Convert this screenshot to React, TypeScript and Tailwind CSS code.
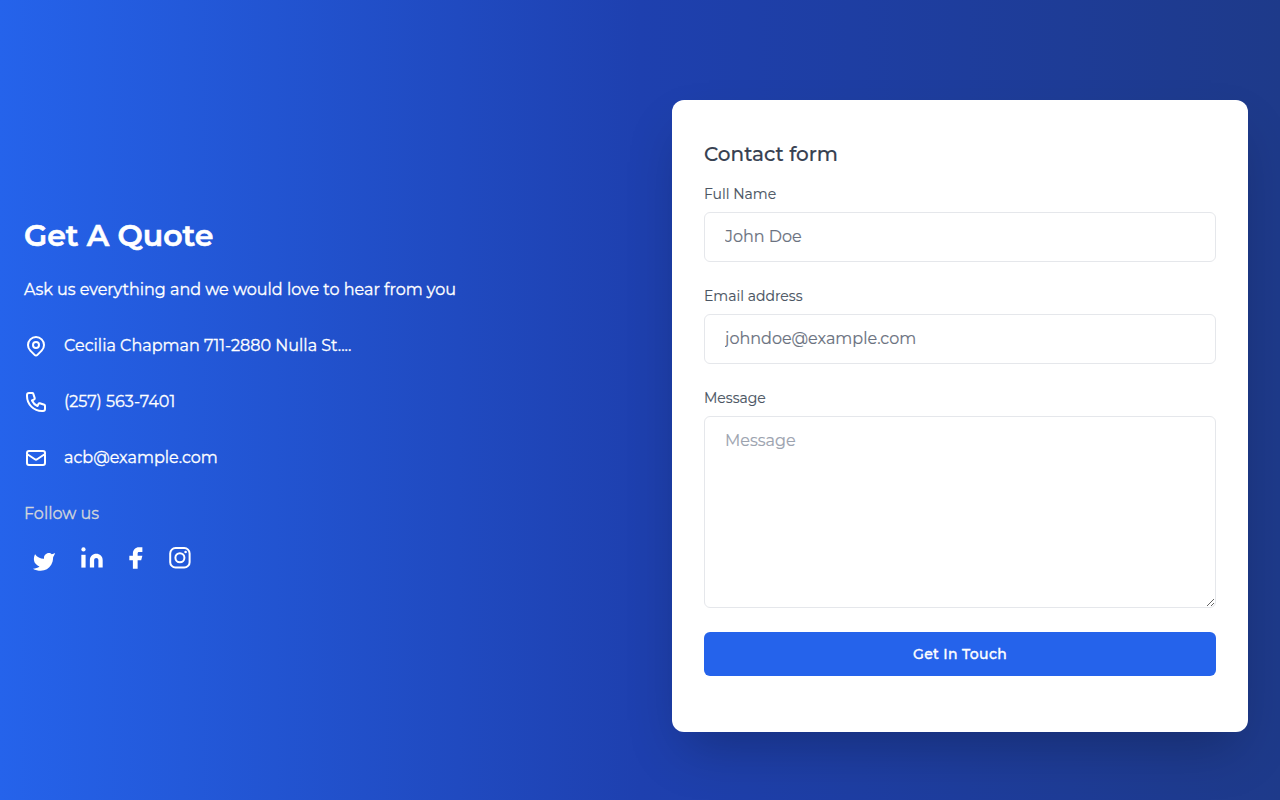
import type { ReactNode } from "react";

function OutlineIcon({ children }: { children: ReactNode }) {
  return (
    <svg className="size-6 shrink-0" viewBox="0 0 24 24" fill="none" stroke="currentColor" strokeWidth={2} strokeLinecap="round" strokeLinejoin="round">
      {children}
    </svg>
  );
}

function ContactInfo() {
  return (
    <section className="w-1/2 px-6 pb-[33px] text-white [-webkit-text-stroke:0.3px]">
      <h1 className="h-9 whitespace-nowrap text-[30px] leading-9 font-semibold [-webkit-text-stroke:0.6px]">Get A Quote</h1>
      <p className="mt-6 h-6 whitespace-nowrap text-base leading-6">
        Ask us everything and we would love to hear from you
      </p>
      <div className="mt-8 flex flex-col gap-8 text-base leading-6">
        <p className="flex h-6 items-start gap-4">
          <OutlineIcon>
            <path d="M17.657 16.657L13.414 20.9a1.998 1.998 0 01-2.827 0l-4.244-4.243a8 8 0 1111.314 0z" />
            <path d="M15 11a3 3 0 11-6 0 3 3 0 016 0z" />
          </OutlineIcon>
          <span className="whitespace-nowrap">Cecilia Chapman 711-2880 Nulla St....</span>
        </p>
        <p className="flex h-6 items-start gap-4">
          <OutlineIcon>
            <path d="M3 5a2 2 0 012-2h3.28a1 1 0 01.948.684l1.498 4.493a1 1 0 01-.502 1.21l-2.257 1.13a11.042 11.042 0 005.516 5.516l1.13-2.257a1 1 0 011.21-.502l4.493 1.498a1 1 0 01.684.949V19a2 2 0 01-2 2h-1C9.716 21 3 14.284 3 6V5z" />
          </OutlineIcon>
          <span className="whitespace-nowrap">(257) 563-7401</span>
        </p>
        <p className="flex h-6 items-start gap-4">
          <OutlineIcon>
            <path d="M3 8l7.89 5.26a2 2 0 002.22 0L21 8M5 19h14a2 2 0 002-2V7a2 2 0 00-2-2H5a2 2 0 00-2 2v10a2 2 0 002 2z" />
          </OutlineIcon>
          <span className="whitespace-nowrap">acb@example.com</span>
        </p>
      </div>
      <h3 className="mt-8 h-6 text-base leading-6 text-[#d1d5db]">Follow us</h3>
      <div className="mt-4 flex gap-3">
        <a href="#" aria-label="Twitter">
          <svg className="size-10" viewBox="0 0 24 24" fill="currentColor">
            <path d="M18.6668 6.67334C18.0002 7.00001 17.3468 7.13268 16.6668 7.33334C15.9195 6.49001 14.8115 6.44334 13.7468 6.84201C12.6822 7.24068 11.9848 8.21534 12.0002 9.33334V10C9.83683 10.0553 7.91016 9.07001 6.66683 7.33334C6.66683 7.33334 3.87883 12.2887 9.3335 14.6667C8.0855 15.498 6.84083 16.0587 5.3335 16C7.53883 17.202 9.94216 17.6153 12.0228 17.0113C14.4095 16.318 16.3708 14.5293 17.1235 11.85C17.348 11.0351 17.4595 10.1932 17.4548 9.34801C17.4535 9.18201 18.4615 7.50001 18.6668 6.67268V6.67334Z" />
          </svg>
        </a>
        <a href="#" aria-label="LinkedIn">
          <svg className="size-8" viewBox="0 0 24 24" fill="currentColor">
            <path d="M15.2 8.8C16.4731 8.8 17.694 9.30576 18.5941 10.2059C19.4943 11.1061 20 12.327 20 13.6V19.2H16.8V13.6C16.8 13.1757 16.6315 12.7687 16.3314 12.4687C16.0313 12.1686 15.6244 12 15.2 12C14.7757 12 14.3687 12.1686 14.0687 12.4687C13.7686 12.7687 13.6 13.1757 13.6 13.6V19.2H10.4V13.6C10.4 12.327 10.9057 11.1061 11.8059 10.2059C12.7061 9.30576 13.927 8.8 15.2 8.8Z" />
            <path d="M7.2 9.6H4V19.2H7.2V9.6Z" />
            <circle cx="5.6" cy="5.6" r="1.6" />
          </svg>
        </a>
        <a href="#" aria-label="Facebook">
          <svg className="size-8" viewBox="0 0 24 24" fill="currentColor">
            <path d="M7 10.2222V13.7778H9.66667V20H13.2222V13.7778H15.8889L16.7778 10.2222H13.2222V8.44444C13.2222 8.2087 13.3159 7.9826 13.4826 7.81591C13.6493 7.64921 13.8754 7.55556 14.1111 7.55556H16.7778V4H14.1111C12.9324 4 11.8019 4.46825 10.9684 5.30175C10.1349 6.13524 9.66667 7.2657 9.66667 8.44444V10.2222H7Z" />
          </svg>
        </a>
        <a href="#" aria-label="Instagram">
          <svg className="size-8" viewBox="0 0 24 24" fill="none" stroke="currentColor" strokeWidth={1.5}>
            <rect x="4.65" y="4.55" width="14.55" height="14.55" rx="4" />
            <circle cx="11.93" cy="11.825" r="3.38" />
            <circle cx="16.2" cy="7.555" r="0.957" fill="currentColor" stroke="none" />
          </svg>
        </a>
      </div>
    </section>
  );
}

function ContactForm() {
  return (
    <section className="w-1/2 px-8">
      <div className="h-[632px] rounded-xl bg-white px-8 pt-10 shadow-2xl [-webkit-text-stroke:0.15px]">
        <h2 className="h-7 text-xl leading-7 font-medium text-[#374151]">Contact form</h2>
        <form className="mt-4">
          <label className="block">
            <span className="block h-5 text-sm leading-5 text-[#4b5563]">Full Name</span>
            <input type="text" placeholder="John Doe" className="mt-2 block h-[50px] w-full rounded-md border border-[#e5e7eb] bg-white px-5 pb-0.5 text-base text-[#374151] placeholder:text-[#6b7280]" />
          </label>
          <label className="mt-6 block">
            <span className="block h-5 text-sm leading-5 text-[#4b5563]">Email address</span>
            <input type="email" placeholder="johndoe@example.com" className="mt-2 block h-[50px] w-full rounded-md border border-[#e5e7eb] bg-white px-5 pb-0.5 text-base text-[#374151] placeholder:text-[#6b7280]" />
          </label>
          <label className="mt-6 block">
            <span className="block h-5 text-sm leading-5 text-[#4b5563]">Message</span>
            <textarea placeholder="Message" className="mt-2 block h-48 w-full rounded-md border border-[#e5e7eb] bg-white px-5 py-3 text-base text-[#374151] placeholder:text-[#9ca3af]" />
          </label>
          <button type="button" className="mt-6 h-11 w-full rounded-md bg-[#2563eb] text-sm leading-5 font-medium tracking-wide text-white [-webkit-text-stroke:0.35px]">
            Get In Touch
          </button>
        </form>
      </div>
    </section>
  );
}

export default function App() {
  return (
    <main className="flex h-[800px] items-center overflow-hidden bg-[linear-gradient(to_right,#2563eb,#1e40af,#1e3a8a)] pt-8 font-['Montserrat',sans-serif]">
      <ContactInfo />
      <ContactForm />
    </main>
  );
}
